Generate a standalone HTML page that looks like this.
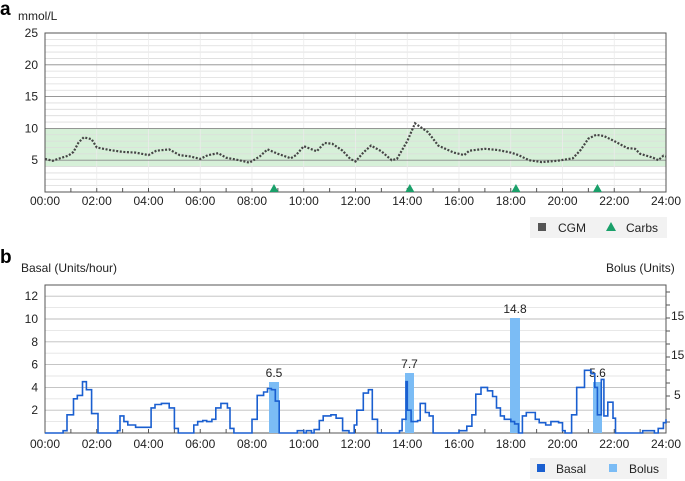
<!DOCTYPE html>
<html><head><meta charset="utf-8"><style>
html,body{margin:0;padding:0;background:#fff;width:685px;height:481px;overflow:hidden}
svg{display:block;font-family:"Liberation Sans",sans-serif}
</style></head><body>
<svg id="s" width="685" height="481" viewBox="0 0 685 481" xmlns="http://www.w3.org/2000/svg">
<text x="0" y="15" font-size="19" font-weight="bold" fill="#000">a</text>
<text x="18" y="20" font-size="12" fill="#222">mmol/L</text>
<text x="0" y="263" font-size="19" font-weight="bold" fill="#000">b</text>
<text x="21" y="272" font-size="12" fill="#222">Basal (Units/hour)</text>
<text x="606" y="272" font-size="12" fill="#222">Bolus (Units)</text>
<g id="g"></g>
<rect x="530" y="217" width="137" height="21" fill="#f2f2f2"/>
<rect x="538" y="223" width="8" height="8" fill="#555"/>
<text x="558" y="232" font-size="12" fill="#222">CGM</text>
<polygon points="606,231 611,222 616,231" fill="#1aa06a"/>
<text x="626" y="232" font-size="12" fill="#222">Carbs</text>
<rect x="530" y="458" width="137" height="21" fill="#f2f2f2"/>
<rect x="537" y="464" width="8" height="8" fill="#1a5fd0"/>
<text x="556" y="473" font-size="12" fill="#222">Basal</text>
<rect x="609" y="464" width="8" height="8" fill="#7bbcf5"/>
<text x="629" y="473" font-size="12" fill="#222">Bolus</text>
</svg>
<script>
var g=document.getElementById('g'),h='';
var X0=45,X1=666,W=(X1-X0)/24;
function x(t){return X0+t*W}
var yA=function(v){return 192-v*159/25};
h+='<rect x="45" y="'+yA(10)+'" width="621" height="'+(yA(4)-yA(10))+'" fill="#d6f0d8"/>';
for(var v=1;v<25;v++){if(v%5)h+='<line x1="45" x2="666" y1="'+yA(v)+'" y2="'+yA(v)+'" stroke="#dcdcdc" stroke-width="0.8"/>';}
for(var t=2;t<24;t+=2)h+='<line x1="'+x(t)+'" x2="'+x(t)+'" y1="33" y2="192" stroke="#ececec" stroke-width="0.8"/>';
for(var v=5;v<25;v+=5)h+='<line x1="45" x2="666" y1="'+yA(v)+'" y2="'+yA(v)+'" stroke="#8a8a8a" stroke-width="0.9"/>';
h+='<rect x="45" y="33" width="621" height="159" fill="none" stroke="#555" stroke-width="1"/>';
[25,20,15,10,5].forEach(function(v){h+='<text x="38" y="'+(yA(v)+4)+'" font-size="12" text-anchor="end" fill="#222">'+v+'</text>'});
for(var t=1;t<24;t++)h+='<line x1="'+x(t)+'" x2="'+x(t)+'" y1="188" y2="192" stroke="#555"/>';
for(var t=0;t<=24;t+=2){var s=(t<10?'0':'')+t+':00';h+='<text x="'+x(t)+'" y="205" font-size="12" text-anchor="middle" fill="#222">'+s+'</text>';h+='<text x="'+x(t)+'" y="448" font-size="12" text-anchor="middle" fill="#222">'+s+'</text>';}
var c=[[0,5.2],[.3,4.9],[.5,5.2],[.9,5.7],[1.1,6.3],[1.3,7.8],[1.5,8.6],[1.8,8.3],[2,7],[2.5,6.6],[3,6.3],[3.5,6.2],[4,5.8],[4.3,6.5],[4.8,6.7],[5.2,5.8],[5.6,5.6],[6,5.2],[6.3,5.8],[6.7,6.1],[7,5.4],[7.5,5],[7.9,4.6],[8.3,5.6],[8.6,6.7],[9,6],[9.5,5.3],[9.7,5.8],[10,7.2],[10.5,6.4],[10.8,7.7],[11.1,7.6],[11.5,6.5],[11.8,5.2],[12,4.8],[12.3,6.2],[12.6,7.3],[13,6.4],[13.4,5],[13.6,5.2],[14,8],[14.3,10.8],[14.8,9.4],[15.2,7.3],[15.8,6.2],[16.2,5.8],[16.4,6.5],[17,6.8],[17.5,6.6],[18,6.2],[18.3,5.8],[18.7,5],[19.2,4.7],[19.8,4.9],[20.4,5.3],[20.7,6.6],[21,8.4],[21.3,9],[21.6,8.8],[22,8],[22.5,6.9],[22.8,6.8],[23,6],[23.5,5.4],[23.7,5],[23.9,5.7],[24,5.6]];
h+='<polyline fill="none" stroke="#444" stroke-width="2.2" stroke-dasharray="2 1.6" points="'+c.map(function(p){return x(p[0]).toFixed(1)+','+yA(p[1]).toFixed(1)}).join(' ')+'"/>';
[8.85,14.1,18.2,21.35].forEach(function(t){var a=x(t);h+='<polygon points="'+(a-4.5)+',192 '+a+',184 '+(a+4.5)+',192" fill="#1aa06a"/>'});
var yB=function(v){return 433-v*11.4};
for(var v=1;v<13;v++)h+='<line x1="45" x2="666" y1="'+yB(v)+'" y2="'+yB(v)+'" stroke="'+(v%2?'#e4e4e4':'#bdbdbd')+'" stroke-width="0.9"/>';
h+='<rect x="45" y="285" width="621" height="148" fill="none" stroke="#555" stroke-width="1"/>';
[12,10,8,6,4,2].forEach(function(v){h+='<text x="38" y="'+(yB(v)+4)+'" font-size="12" text-anchor="end" fill="#222">'+v+'</text>'});
for(var t=1;t<24;t++)h+='<line x1="'+x(t)+'" x2="'+x(t)+'" y1="429" y2="433" stroke="#555"/>';
for(var y=292;y<433;y+=13)h+='<line x1="666" x2="670" y1="'+y+'" y2="'+y+'" stroke="#555"/>';
h+='<text x="671" y="320" font-size="12" fill="#222">15</text><text x="671" y="359" font-size="12" fill="#222">15</text><text x="674" y="399" font-size="12" fill="#222">5</text>';
[[269,279,382,'6.5'],[405,414,373,'7.7'],[510,520,318,'14.8'],[593,602,382,'5.6']].forEach(function(b){h+='<rect x="'+b[0]+'" y="'+b[2]+'" width="'+(b[1]-b[0])+'" height="'+(433-b[2])+'" fill="#7bbcf5"/>';h+='<text x="'+((b[0]+b[1])/2)+'" y="'+(b[2]-5)+'" font-size="12" text-anchor="middle" fill="#222">'+b[3]+'</text>'});
var st=[[0,0],[.7,.2],[.85,1.6],[1.1,3],[1.25,3.3],[1.45,4.5],[1.6,3.8],[1.8,1.7],[2.05,0],[2.8,.2],[2.9,1.5],[3.05,1],[3.2,.7],[3.5,.5],[4.1,2.2],[4.25,2.5],[4.5,2.6],[4.8,2.2],[5,.4],[5.15,0],[5.75,.7],[5.9,1],[6.1,1.1],[6.25,1],[6.45,1.2],[6.6,2.2],[6.8,2.6],[7.05,2.2],[7.15,.4],[7.3,0],[8,1.2],[8.2,3.3],[8.45,3.6],[8.6,3.9],[8.75,3.8],[8.9,2.8],[9.05,0],[9.75,.2],[10,0],[10.1,.2],[10.3,0],[10.4,.3],[10.6,1.1],[10.75,1.5],[11.05,1.6],[11.25,1.3],[11.5,.2],[11.75,0],[11.95,.7],[12.05,2],[12.3,3.5],[12.5,3.8],[12.65,1.2],[12.85,0],[13.7,.2],[13.8,1.2],[13.95,4.5],[14,2],[14.15,1],[14.4,1.1],[14.5,2.6],[14.7,1.8],[14.85,1.5],[15,0],[16,.2],[16.3,.6],[16.5,1.6],[16.65,3.4],[16.85,4],[17.1,3.7],[17.3,3.2],[17.45,2.2],[17.6,1.5],[17.75,1.2],[18,1],[18.15,.8],[18.3,0],[18.45,1.5],[18.6,1.8],[18.95,1.2],[19.1,.9],[19.35,.7],[19.55,1],[19.85,.9],[20,.2],[20.1,0],[20.35,1.6],[20.55,4],[20.85,5.5],[21.1,5.2],[21.25,4],[21.35,1.6],[21.5,4.7],[21.6,1.5],[21.75,2.7],[21.95,1.3],[22.05,0],[23.1,.2],[23.55,0],[23.7,.4],[23.9,.9],[24,1.2]];
var d='M'+x(0)+','+yB(0);
for(var i=1;i<st.length;i++){d+=' H'+x(st[i][0]).toFixed(1)+' V'+yB(st[i][1]).toFixed(1);}
h+='<path d="'+d+'" fill="none" stroke="#1a5fd0" stroke-width="1.6"/>';
g.innerHTML=h;
</script>
</body></html>
